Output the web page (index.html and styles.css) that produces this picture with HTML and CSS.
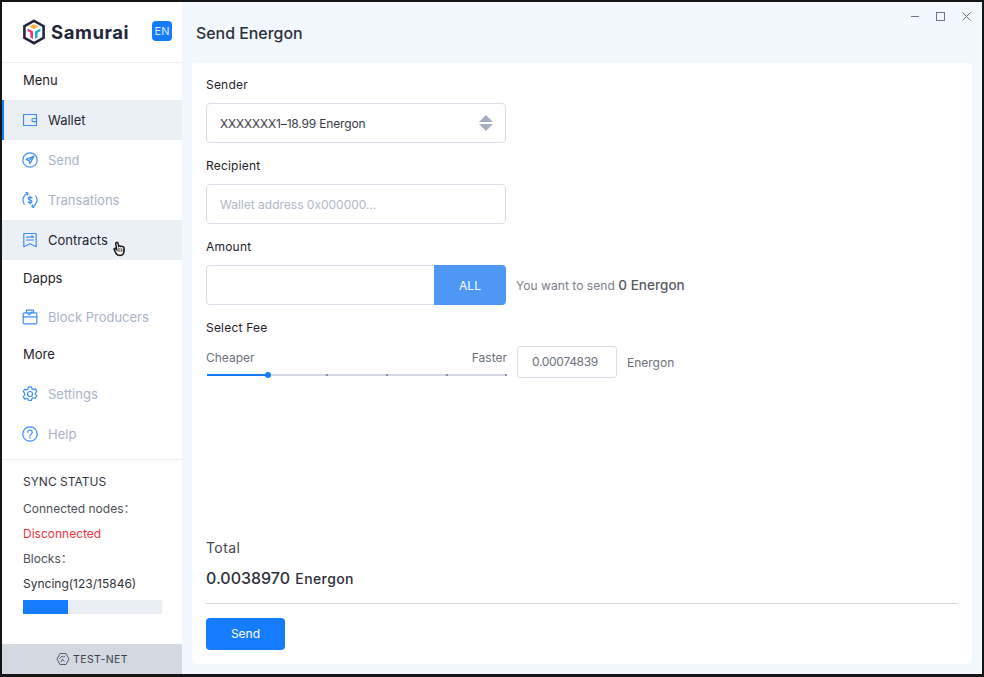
FILE: index.html
```html
<!DOCTYPE html>
<html lang="en">
<head>
<meta charset="utf-8">
<title>Samurai</title>
<link rel="stylesheet" href="styles.css">
</head>
<body>
<div class="app">
  <aside class="sidebar">
    <div class="brand">
      <svg class="logo" viewBox="0 0 24 26" width="24" height="26">
        <path d="M12 1.8 21.6 7.2v11.6L12 24.2 2.4 18.8V7.2z" fill="none" stroke="#23263a" stroke-width="2.6" stroke-linejoin="miter"/>
        <path d="M7.4 7.6 12 5.2l4.6 2.4L12 10z" fill="#f9b233"/>
        <path d="M5.6 9.6 11 12.4V20l-2.6-1.5v-4.7L5.6 12.3z" fill="#ee2f7c"/>
        <path d="M18.4 9.6 13 12.4V20l2.6-1.5v-4.7l2.8-1.5z" fill="#17b5c9"/>
      </svg>
      <span class="brand-name">Samurai</span>
      <span class="lang">EN</span>
    </div>
    <nav class="nav">
      <div class="group first">Menu</div>
      <a class="item active">
        <svg class="ico" viewBox="0 0 16 16"><rect x="1.500" y="2.500" width="13" height="11"/><path d="M14.500 6.500h-3a1.600 1.600 0 0 0 0 3.200h3"/></svg>
        <span>Wallet</span>
      </a>
      <a class="item">
        <svg class="ico" viewBox="0 0 16 16"><circle cx="8" cy="8" r="7.200"/><path d="M12 4 4.200 7.400l2.700 1.300 1.200 3zM12 4 6.900 8.700M8.100 11.700l1.100-2"/></svg>
        <span>Send</span>
      </a>
      <a class="item">
        <svg class="ico" viewBox="0 0 16 16"><path d="M2.200 12A7.200 7.200 0 0 1 5.800 1.200M13.800 4A7.200 7.200 0 0 1 10.200 14.800"/><path d="M4 .6 6 1.100 5.400 3M12 15.400 10 14.900l.6-1.900"/><path d="M10 6.200C9.700 5.500 9 5.100 8 5.100c-1.100 0-1.900.5-1.900 1.400 0 2 3.900 1 3.900 3 0 .9-.8 1.400-2 1.400-1 0-1.700-.4-2-1.100M8 4v8"/></svg>
        <span>Transations</span>
      </a>
      <a class="item hover">
        <svg class="ico" viewBox="0 0 16 16"><path d="M1.800 1.500h12.400v13.200L8 11.800l-6.200 2.900z"/><path d="M4.500 5.200h7M4.500 8h7M9.800 3.700l1.700 1.500"/></svg>
        <span>Contracts</span>
      </a>
      <div class="group">Dapps</div>
      <a class="item short">
        <svg class="ico" viewBox="0 0 16 16"><rect x="1.200" y="3.800" width="13.600" height="11" rx="1"/><path d="M4.500 3.800V1.200h7v2.600M1.200 7.800h13.600M5.800 4.600 7.300 5.900 10 3"/></svg>
        <span>Block Producers</span>
      </a>
      <div class="group">More</div>
      <a class="item">
        <svg class="ico" viewBox="0 0 16 16"><path d="M6.500.8h3l.5 2.100 1.300.7 2-.7 1.500 2.500-1.500 1.500v1.400l1.500 1.500-1.500 2.500-2-.7-1.300.7-.5 2.100h-3L6 13.100l-1.300-.7-2 .7-1.500-2.500 1.500-1.500V7.200L1.200 5.700l1.500-2.500 2 .7L6 2.900z"/><circle cx="8" cy="8" r="2.500"/></svg>
        <span>Settings</span>
      </a>
      <a class="item">
        <svg class="ico" viewBox="0 0 16 16"><circle cx="8" cy="8" r="7.200"/><path d="M5.800 6.300A2.200 2.200 0 1 1 9.100 8.200c-.8.4-1.100.8-1.100 1.600M8 11.200v.9"/></svg>
        <span>Help</span>
      </a>
    </nav>
    <section class="sync">
      <div class="sync-title">SYNC STATUS</div>
      <div class="sync-row muted">Connected nodes：</div>
      <div class="sync-row danger">Disconnected</div>
      <div class="sync-row muted">Blocks：</div>
      <div class="sync-row">Syncing(123/15846)</div>
      <div class="progress"><div class="progress-bar" style="width:32.4%"></div></div>
    </section>
    <footer class="net">
      <svg class="net-ico" viewBox="0 0 14 14" width="14" height="14"><path d="M4 1.500h6L13 7l-3 5.500H4L1 7z"/><path d="M3.500 6.500 6 4l1.500 1.200L9 4M6 7l2.500 2.500M5 10l1.500-3"/></svg>
      <span>TEST-NET</span>
    </footer>
  </aside>
  <main class="main">
    <header class="topbar">
      <h1 class="title">Send Energon</h1>
      <div class="winctl">
        <svg viewBox="0 0 10 10" width="10" height="10"><path d="M1 4.500h8"/></svg>
        <svg viewBox="0 0 10 10" width="10" height="10"><rect x=".5" y=".5" width="8" height="8"/></svg>
        <svg viewBox="0 0 10 10" width="10" height="10"><path d="M.5.5l8 8M8.500.5l-8 8"/></svg>
      </div>
    </header>
    <section class="card">
      <div class="field-list">
        <label class="label">Sender</label>
        <div class="control select">
          <span class="select-text">XXXXXXX1–18.99 Energon</span>
          <span class="arrows"><i class="up"></i><i class="down"></i></span>
        </div>
        <label class="label">Recipient</label>
        <div class="control placeholder">Wallet address 0x000000...</div>
        <label class="label">Amount</label>
        <div class="amount-row">
          <div class="amount-box">
            <div class="amount-input"></div>
            <div class="all">ALL</div>
          </div>
          <div class="amount-note">You want to send <b>0 Energon</b></div>
        </div>
        <label class="label">Select Fee</label>
        <div class="fee-row">
          <div class="slider-wrap">
            <div class="slider-labels"><span>Cheaper</span><span>Faster</span></div>
            <div class="slider">
              <div class="slider-fill"></div>
              <i class="tick t1"></i><i class="tick t2"></i><i class="tick t3"></i><i class="tick t4"></i>
              <i class="thumb"></i>
            </div>
          </div>
          <div class="fee-input">0.00074839</div>
          <div class="fee-unit">Energon</div>
        </div>
      </div>
      <div class="summary">
        <div class="total-label">Total</div>
        <div class="total-value">0.0038970 <small>Energon</small></div>
        <hr class="rule">
        <button class="send" type="button">Send</button>
      </div>
    </section>
  </main>
  <svg class="cursor" viewBox="0 0 14 17" width="14" height="17">
    <path d="M3.200 1.600c.8-.6 1.700-.2 1.900.7l.6 3c.5-.5 1.400-.5 1.800.1.500-.4 1.300-.3 1.700.2.600-.3 1.400 0 1.600.7.500 1.700.5 3.700-.1 5.400-.5 1.600-1.900 2.800-3.700 2.800-2 0-3.300-.7-4.100-2.400L1.200 8.600c-.4-.8.600-1.700 1.500-1l1 1L2.800 3c-.1-.5 0-1 .4-1.400z" fill="#fff" stroke="#1c1c1c" stroke-width="1.500"/>
    <path d="M6 7v4M8.200 7.200v3.800M10.200 7.600V11" stroke="#1c1c1c" stroke-width=".9" fill="none"/>
  </svg>
</div>
</body>
</html>
```
FILE: styles.css
```css
* { box-sizing: border-box; }
html, body { margin: 0; height: 100%; }
body {
  background: #151515;
  padding: 2px 2px 3px;
  font-family: Inter, "Liberation Sans", "Noto Sans CJK SC", sans-serif;
  color: #2a2d3a;
  overflow: hidden;
}
.app { position: relative; display: flex; height: 672px; background: #f3f7fe; }

/* Sidebar */
.sidebar { width: 180px; flex: none; display: flex; flex-direction: column; background: #fff; }
.brand {
  height: 61px; flex: none; display: flex; align-items: center;
  padding: 0 10px 0 21px; border-bottom: 1px solid #e9eff7;
}
.logo { flex: none; margin-left: -1px; }
.brand-name { margin-left: 5px; font-size: 18.5px; font-weight: 700; letter-spacing: .55px; color: #23263a; }
.lang {
  margin-left: auto; width: 20px; height: 20px; border-radius: 4px; background: #157cff; color: #dbe9ff;
  font-size: 11px; line-height: 20px; text-align: center; margin-top: -2px;
}
.nav { flex: none; height: 397px; border-bottom: 1px solid #eceff4; }
.group { height: 38px; line-height: 37px; padding-left: 21px; font-size: 13px; color: #1f2129; }
.group.first { height: 37px; line-height: 35px; }
.item {
  height: 40px; display: flex; align-items: center; padding-left: 20px;
  font-size: 13px; color: #a8b3c8;
}
.item.short { height: 38px; }
.item span { margin-left: 10px; margin-top: -1px; }
.item.active { background: #ebf0f7; color: #23252e; box-shadow: inset 2px 0 0 #157cff; }
.item.hover { background: #ebf0f7; color: #23252e; }
.ico { width: 16px; height: 16px; flex: none; fill: none; stroke: #3f8ef5; stroke-width: 1.2; stroke-linejoin: round; stroke-linecap: round; }

.sync { flex: 1; padding: 14px 20px 0 21px; font-size: 12px; }
.sync-title { height: 22px; line-height: 16px; font-size: 12px; color: #34373f; }
.sync-row { height: 25px; line-height: 25px; color: #2f3239; }
.sync-row.muted { color: #4d5058; }
.sync-row.danger { color: #f5333f; }
.progress { height: 14px; margin-top: 4px; background: #e9edf4; }
.progress-bar { height: 100%; background: #157cff; }
.net {
  height: 30px; flex: none; display: flex; align-items: center; justify-content: center; gap: 3px;
  background: #d3d8e1; font-size: 10.5px; letter-spacing: .4px; color: #3c3f48;
}
.net-ico { fill: none; stroke: #3c3f48; stroke-width: .8; }

/* Main */
.main { flex: 1; min-width: 0; display: flex; flex-direction: column; padding: 0 10px 10px 10px; }
.topbar { height: 61px; flex: none; display: flex; justify-content: space-between; position: relative; }
.title { margin: 21px 0 0 4px; font-size: 15.9px; line-height: 22px; font-weight: 500; color: #2d3039; }
.winctl { display: flex; gap: 16px; padding-top: 10px; height: 20px; }
.winctl svg { fill: none; stroke: #6f7480; stroke-width: 1; }
.card { flex: 1; background: #fff; border-radius: 5px; padding: 0 14px 14px; display: flex; flex-direction: column; justify-content: space-between; }
.label { display: block; height: 40px; padding-top: 14px; line-height: 16px; font-size: 12px; letter-spacing: .2px; color: #1f2129; }
.label:not(:first-child) { height: 41px; padding-top: 15px; }
.control {
  width: 300px; height: 40px; border: 1px solid #d8dde8; border-radius: 4px;
  display: flex; align-items: center; padding: 0 13px; font-size: 12px; color: #383b44;
}
.select-text { letter-spacing: -.17px; }
.placeholder { color: #b0b9cb; }
.select { justify-content: space-between; }
.arrows { display: flex; flex-direction: column; gap: 2px; margin-right: -1px; }
.arrows i { width: 0; height: 0; border-left: 7px solid transparent; border-right: 7px solid transparent; }
.arrows .up { border-bottom: 7px solid #a5aec1; }
.arrows .down { border-top: 7px solid #a5aec1; }
.amount-row { display: flex; align-items: center; gap: 10px; }
.amount-box { width: 300px; height: 40px; display: flex; }
.amount-input { flex: 1; border: 1px solid #d8dde8; border-right: 0; border-radius: 4px 0 0 4px; }
.all { width: 72px; background: #4e97f5; color: #fff; border-radius: 0 4px 4px 0; font-size: 12px; line-height: 41px; text-align: center; }
.amount-note { font-size: 12px; letter-spacing: .05px; color: #7a7e89; }
.amount-note b { font-size: 13.5px; font-weight: 500; color: #565a66; letter-spacing: .05px; }
.fee-row { display: flex; align-items: flex-start; }
.slider-wrap { width: 301px; font-size: 12px; color: #6d717c; padding-top: 4px; }
.slider-labels { display: flex; justify-content: space-between; line-height: 16px; }
.slider { position: relative; height: 2px; margin: 8px 0 0 1px; background: #d3d8e4; }
.slider-fill { width: 61px; height: 100%; background: #157cff; }
.tick { position: absolute; top: 0; width: 2px; height: 2px; background: #8d929e; }
.t1 { left: 119px; } .t2 { left: 179px; } .t3 { left: 239px; } .t4 { left: 298px; }
.thumb { position: absolute; left: 58px; top: -2px; width: 6px; height: 6px; border-radius: 50%; background: #157cff; }
.fee-input {
  width: 100px; height: 32px; margin-left: 10px; padding-right: 4px; border: 1px solid #d8dde8; border-radius: 3px;
  font-size: 12px; letter-spacing: -.3px; line-height: 30px; text-align: center; color: #6d717c;
}
.fee-unit { margin-left: 10px; font-size: 12px; line-height: 34px; color: #6d717c; }
.summary { display: flex; flex-direction: column; align-items: flex-start; }
.total-label { font-size: 14px; line-height: 18px; letter-spacing: .4px; color: #43464f; }
.total-value { margin-top: 11px; font-size: 16px; line-height: 20px; font-weight: 500; color: #2d3039; }
.total-value small { margin-left: 1px; font-size: 14px; letter-spacing: .4px; }
.rule { width: 100%; margin: 14px 0; border: 0; border-top: 1px solid #d5d8e0; }
.send { width: 79px; height: 32px; padding: 0 0 2px; border: 0; border-radius: 4px; background: #157cff; color: #fff; font: 400 12px Inter, "Liberation Sans", sans-serif; }

.cursor { position: absolute; left: 111px; top: 239px; }
```
